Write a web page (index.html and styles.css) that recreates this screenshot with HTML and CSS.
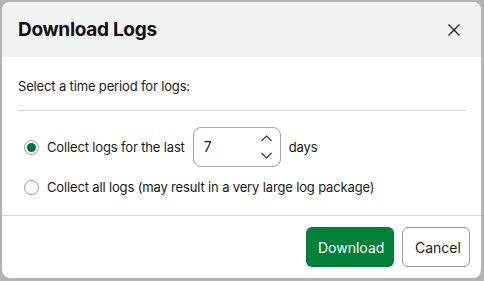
FILE: index.html
```html
<!DOCTYPE html>
<html lang="en">
  <head>
    <meta charset="UTF-8" />
    <meta name="viewport" content="width=device-width, initial-scale=1.0" />
    <title>Download Logs</title>
    <link rel="stylesheet" href="styles.css">
  </head>
  <body>
    <div class="dialog">
      <div class="dialog-header">
        <h1>Download Logs</h1>
        <button class="close" aria-label="Close">
          <svg width="12" height="12" viewBox="0 0 12 12">
            <path d="M0.5 0.5 L11.5 11.5 M11.5 0.5 L0.5 11.5" stroke="#1a1a1a" stroke-width="1.3" fill="none" />
          </svg>
        </button>
      </div>
      <div class="dialog-body">
        <p class="intro">Select a time period for logs:</p>
        <div class="option option-days">
          <span class="radio checked"></span>
          <span>Collect logs for the last</span>
          <div class="number-field">
            <span class="value">7</span>
            <div class="spin">
              <svg width="11" height="7" viewBox="0 0 11 7"><path d="M0.5 6 L5.5 1 L10.5 6" stroke="#333" stroke-width="1.1" fill="none" /></svg>
              <svg width="11" height="7" viewBox="0 0 11 7"><path d="M0.5 1 L5.5 6 L10.5 1" stroke="#333" stroke-width="1.1" fill="none" /></svg>
            </div>
          </div>
          <span>days</span>
        </div>
        <div class="option">
          <span class="radio"></span>
          <span>Collect all logs (may result in a very large log package)</span>
        </div>
      </div>
      <div class="dialog-footer">
        <button class="btn btn-primary">Download</button>
        <button class="btn btn-secondary">Cancel</button>
      </div>
    </div>
  </body>
</html>
```

FILE: styles.css
```css
body {
  margin: 0;
  padding: 2px 3px 3px 2px;
  height: 281px;
  box-sizing: border-box;
  background: #b3b3b3;
  font-family: Inter, "Liberation Sans", sans-serif;
  color: #1a1a1a;
}
.dialog {
  height: 100%;
  background: #fff;
  border-radius: 8px;
  overflow: hidden;
  display: flex;
  flex-direction: column;
}
.dialog-header {
  height: 55px;
  background: #f1f3f3;
  display: flex;
  align-items: center;
  justify-content: space-between;
  padding: 0 21px 0 16px;
}
.dialog-header h1 {
  margin: 0;
  font-size: 19px;
  font-weight: 700;
  letter-spacing: -0.3px;
  color: #111;
}
.close {
  background: none;
  border: none;
  padding: 0;
  display: flex;
}
.dialog-body {
  padding: 19px 15px 18px 16px;
  font-size: 13px;
  letter-spacing: -0.15px;
  border-bottom: 1px solid #d4d4d4;
}
.intro {
  margin: 0;
  line-height: 20px;
  padding-bottom: 14px;
  border-bottom: 1px solid #d4d4d4;
}
.option {
  display: flex;
  align-items: center;
  gap: 8px;
  line-height: 20px;
  padding-left: 6px;
}
.option-days {
  margin: 16px 0 10px;
}
.radio {
  width: 13px;
  height: 13px;
  border: 1px solid #9a9a9a;
  border-radius: 50%;
  position: relative;
  flex-shrink: 0;
}
.radio.checked::after {
  content: "";
  position: absolute;
  left: 2px;
  top: 2px;
  width: 9px;
  height: 9px;
  border-radius: 50%;
  background: #00733a;
}
.number-field {
  width: 88px;
  height: 40px;
  box-sizing: border-box;
  border: 1px solid #a6a6a6;
  border-radius: 8px;
  display: flex;
  align-items: center;
  justify-content: space-between;
  padding: 0 8px 0 10px;
  font-size: 14px;
}
.spin {
  display: flex;
  flex-direction: column;
  gap: 10px;
}
.spin svg {
  display: block;
}
.dialog-footer {
  flex: 1;
  display: flex;
  justify-content: flex-end;
  align-items: flex-start;
  gap: 8px;
  padding: 11px 11px 0 0;
}
.btn {
  height: 40px;
  border-radius: 6px;
  font-family: inherit;
  font-size: 14px;
  font-weight: 400;
  padding: 0 12px;
}
.btn-primary {
  width: 88px;
  background: #008038;
  color: #fff;
  border: none;
}
.btn-secondary {
  width: 68px;
  background: #fff;
  color: #1a1a1a;
  border: 1px solid #9a9a9a;
}
```
